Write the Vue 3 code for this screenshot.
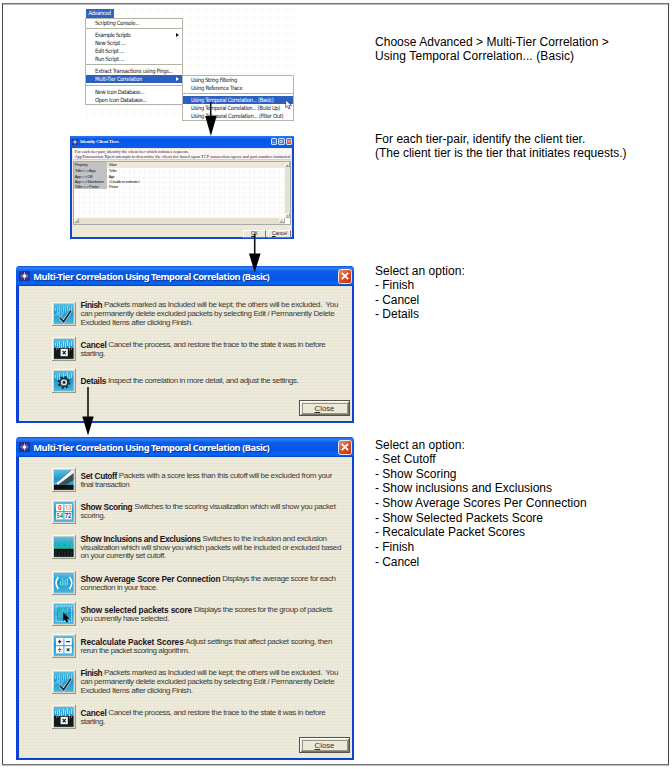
<script setup>
import { h } from 'vue'

// Tracks a run of text so that it fills its measure exactly.
const vFit = {
  mounted(el, { value }) {
    if (!value) return
    const w = el.getBoundingClientRect().width
    el.style.letterSpacing = (value - w) / el.textContent.length + 'px'
  }
}

const menu = [
  { t: 'Scripting Console...', w: 44.3 },
  null,
  { t: 'Example Scripts', w: 35.3, sub: true },
  { t: 'New Script ...', w: 30.3 },
  { t: 'Edit Script ...', w: 29 },
  { t: 'Run Script ...', w: 29.3 },
  null,
  { t: 'Extract Transactions using Pings...', w: 77.7 },
  { t: 'Multi-Tier Correlation', w: 47, sub: true, on: true },
  null,
  { t: 'New Icon Database...', w: 49.3 },
  { t: 'Open Icon Database...', w: 51.7 }
]
const submenu = [
  { t: 'Using String Filtering', w: 45.9 },
  { t: 'Using Reference Trace', w: 51.3 },
  null,
  { t: 'Using Temporal Correlation... (Basic)', w: 82.5, on: true },
  { t: 'Using Temporal Correlation... (Build Up)', w: 89 },
  { t: 'Using Temporal Correlation... (Filter Out)', w: 92.3 }
]

const tiers = [
  ['Teller <-> App', 20.7, 'Teller', 8],
  ['App <-> DB', 17.7, 'App', 5.3],
  ['App <-> Mainframe', 29, '<Unable to estimate>', 31],
  ['Teller <-> Printer', 24, 'Printer', 9.3]
]

const finish = {
  icon: 'finish', name: 'Finish', nw: 21.7,
  lines: [
    [' Packets marked as Included will be kept; the others will be excluded.  You', 235.8],
    ['can permanently delete excluded packets by selecting Edit / Permanently Delete', 253.7],
    ['Excluded Items after clicking Finish.', 112]
  ]
}
const cancel = {
  icon: 'cancel', name: 'Cancel', nw: 26,
  lines: [[' Cancel the process, and restore the trace to the state it was in before', 218.8], ['starting.', 24.3]]
}
const dialogs = [
  {
    cls: 'short',
    options: [
      finish,
      cancel,
      { icon: 'details', name: 'Details', nw: 25.7, lines: [[' Inspect the correlation in more detail, and adjust the settings.', 192.3]] }
    ]
  },
  {
    cls: 'tall',
    options: [
      { icon: 'cutoff', name: 'Set Cutoff', nw: 36.5, lines: [[' Packets with a score less than this cutoff will be excluded from your', 215], ['final transaction', 48.9]] },
      { icon: 'scoring', name: 'Show Scoring', nw: 51.9, lines: [[' Switches to the scoring visualization which will show you packet', 203.1], ['scoring.', 24.5]] },
      { icon: 'inclusions', name: 'Show Inclusions and Exclusions', nw: 120.2, lines: [[' Switches to the inclusion and exclusion', 125.9], ['visualization which will show you which packets will be included or excluded based', 260.5], ['on your currently set cutoff.', 85.2]] },
      { icon: 'average', name: 'Show Average Score Per Connection', nw: 139.9, lines: [[' Displays the average score for each', 115.1], ['connection in your trace.', 77]] },
      { icon: 'selected', name: 'Show selected packets score', nw: 111.6, lines: [[' Displays the scores for the group of packets', 140], ['you currently have selected.', 88.5]] },
      { icon: 'recalc', name: 'Recalculate Packet Scores', nw: 103.2, lines: [[' Adjust settings that affect packet scoring, then', 148.4], ['rerun the packet scoring algorithm.', 108.9]] },
      finish,
      cancel
    ]
  }
]

const notes = [
  { cls: 'n1', lines: [['Choose Advanced > Multi-Tier Correlation >', 233.8], ['Using Temporal Correlation... (Basic)', 199.2]] },
  { cls: 'n2', lines: [['For each tier-pair, identify the client tier.', 210.3], ['(The client tier is the tier that initiates requests.)', 251.5]] },
  { cls: 'n3', lines: [['Select an option:', 89.8], ['- Finish', 39.2], ['- Cancel', 44.2], ['- Details', 44]] },
  {
    cls: 'n4',
    lines: [
      ['Select an option:', 89.8], ['- Set Cutoff', 60.7], ['- Show Scoring', 81.5],
      ['- Show inclusions and Exclusions', 177], ['- Show Average Scores Per Connection', 211.6],
      ['- Show Selected Packets Score', 168], ['- Recalculate Packet Scores', 150],
      ['- Finish', 39.2], ['- Cancel', 44.2]
    ]
  }
]

const p = (d, a = {}) => h('path', { d, fill: 'none', ...a })
const r = (x, y, width, height, fill, a = {}) => h('rect', { x, y, width, height, fill, ...a })
const num = (x, y, t, fill) => h('text', { x, y, fill, 'font-size': 7, 'font-family': 'Noto Sans, sans-serif', 'font-weight': 600, 'text-anchor': 'middle', textLength: t.length > 1 ? 6.6 : 3.6, lengthAdjust: 'spacingAndGlyphs' }, t)
const wave = (stroke) => p('M3.5 9V6M5.5 11V5M7.5 12V4M9.5 11V6.5M11.5 10V4M13.5 11V5M15.5 9V3M17.5 11V6M19.5 9V4', { stroke, 'stroke-width': 0.7 })

const art = {
  finish: () => [wave('#a5dcf2'), p('M2 13h3v-2h2v3h3v-3h2', { stroke: '#9adcf2', 'stroke-width': 0.8 }), p('M8.3 16.2L11.6 19.6L18.8 8.8', { stroke: '#e6f4f8', 'stroke-width': 2.8 }), p('M8.3 16.2L11.6 19.6L18.8 8.8', { stroke: '#1b2226', 'stroke-width': 1.7 })],
  cancel: () => [wave('#d8f2fc'), r(2, 11, 19.5, 10.8, '#15191b'), p('M4.5 11v2.5M6.5 11v1.5M17.5 11v3M19.5 11v2', { stroke: '#6f8f9a', 'stroke-width': 0.7 }), r(8.6, 11.8, 7.2, 7.4, '#fff'), p('M10.6 13.8l3.2 3.5M13.8 13.8l-3.2 3.5', { stroke: '#111', 'stroke-width': 1.1 })],
  details: () => [wave('#c2eafa'), h('circle', { cx: 12, cy: 13.4, r: 5.5, fill: 'none', stroke: '#1c2327', 'stroke-width': 1.7, 'stroke-dasharray': '2.2 2.12' }), h('circle', { cx: 12, cy: 13.4, r: 4, fill: '#b9e1ee', stroke: '#1c2327', 'stroke-width': 1.6 }), h('circle', { cx: 12, cy: 13.4, r: 1.4, fill: '#1c2327' })],
  cutoff: () => [r(2, 16.8, 19.5, 5, '#0d1113'), p('M2.2 17L18 2.4L21.5 2V5L12 14Z', { fill: '#f1f5f6' }), p('M2.2 17.3L21.5 4.5V12L14 16.8H2.2Z', { fill: '#3d5059' }), p('M4 15.6L18.5 2.5', { stroke: '#20343e', 'stroke-width': 0.7 }), p('M5 16L21.3 3.8', { stroke: '#f6fafa', 'stroke-width': 2.4 })],
  scoring: () => [r(4, 4, 7.4, 7.2, '#fff'), r(12.4, 4, 7.4, 7.2, '#fff'), r(4, 12.2, 7.4, 7.2, '#fff'), r(12.4, 12.2, 7.4, 7.2, '#fff'), num(7.7, 10.2, '0', '#d8332b'), num(16, 10.2, '13', '#ef8b2c'), num(7.7, 18.4, '54', '#187a52'), num(16, 18.4, '72', '#27348f')],
  inclusions: () => [r(2, 13.5, 19.5, 8.3, '#0c1012'), p('M3 14V10M5 14V6M7 14V10.5M9 14V5M11 14V9.5M13 14V11M15 14V7M17 14V4.5M19.4 14V8M20.8 14V10', { stroke: '#26d08a', 'stroke-width': 1 }), p('M4 15V21M7 16V21M10 15V21M13 16V21M16 15V21M19 16V21', { stroke: '#59676b', 'stroke-width': 0.5 })],
  average: () => [p('M6.3 6Q1.8 11.7 6.3 18M17.5 6Q22 11.7 17.5 18', { stroke: '#fff', 'stroke-width': 1.6 }), p('M8.5 14V10M10.3 15V7M12 14V9.5M13.8 15V8M15.4 14V7', { stroke: '#70f0dc', 'stroke-width': 0.9 })],
  selected: () => [r(4, 4, 15.6, 15.4, 'none', { stroke: '#e4f6fc', 'stroke-width': 0.8, 'stroke-dasharray': '1.6 .9' }), p('M7 15V10M9 15V8M11 13V6.5M13 11V8M15.5 11V6', { stroke: '#3fdcc0', 'stroke-width': 1 }), p('M11.2 10.2V19L13.1 17.3L14.5 20.4L16.2 19.6L14.8 16.7H17.5Z', { fill: '#050708' })],
  recalc: () => [r(4, 4, 7.4, 7.2, '#fff'), r(12.4, 4, 7.4, 7.2, '#fff'), r(4, 12.2, 7.4, 7.2, '#fff'), r(12.4, 12.2, 7.4, 7.2, '#fff'), p('M5.9 7.6h3.6M7.7 5.8v3.6M14.2 7.6h3.8M5.9 15.8h3.6M14.7 14.4l2.8 2.8M17.5 14.4l-2.8 2.8', { stroke: '#263238', 'stroke-width': 1.1 }), p('M7.2 13.7h1v1h-1zM7.2 16.9h1v1h-1z', { fill: '#263238' })]
}

const OptionIcon = ({ kind }) =>
  h('svg', { width: 24, height: 24, viewBox: '0 0 24 24' }, [
    r(0, 0, 24, 24, '#9c998b'),
    r(0, 0, 23, 23, '#fbf9ee'),
    r(1, 1, 22, 22, '#d9d5c6'),
    r(2, 1.8, 19.5, 20, 'url(#sky)'),
    ...art[kind]()
  ])
OptionIcon.props = ['kind']
</script>

<template>
  <main class="page">
    <svg class="defs" width="0" height="0">
      <linearGradient id="sky" x1="0" y1="0" x2="0" y2="1">
        <stop offset="0" stop-color="#5cc0e6" />
        <stop offset=".45" stop-color="#1f96cb" />
        <stop offset="1" stop-color="#4bb4de" />
      </linearGradient>
    </svg>

    <section class="figures">
      <div class="menu-shot">
        <div class="menu-tab"><span v-fit="22">Advanced</span></div>
        <div class="menu">
          <template v-for="(m, i) in menu" :key="i">
            <div v-if="m" class="item" :class="{ on: m.on }">
              <span v-fit="m.w">{{ m.t }}</span>
              <i v-if="m.sub" class="more"></i>
            </div>
            <div v-else class="sep"></div>
          </template>
        </div>
        <div class="menu submenu">
          <template v-for="(m, i) in submenu" :key="i">
            <div v-if="m" class="item" :class="{ on: m.on }"><span v-fit="m.w">{{ m.t }}</span></div>
            <div v-else class="sep"></div>
          </template>
        </div>
        <svg class="pointer" width="8" height="11" viewBox="0 0 8 11">
          <path d="M.8 .8V8.6L2.6 7L3.8 9.9L5.2 9.3L4 6.5H6.4Z" fill="#fff" stroke="#29365c" stroke-width=".7" />
        </svg>
      </div>

      <div class="tiers">
        <header>
          <svg width="6" height="6" viewBox="0 0 6 6"><rect width="6" height="6" fill="#27328f" /><path d="M3 .6V5.4M.6 3H5.4" stroke="#fff" stroke-width=".8" /></svg>
          <span v-fit="38.7" class="tiers-title">Identify Client Tiers</span>
          <b class="wb"><svg viewBox="0 0 6 6"><path d="M1.3 4.5H3.6" /></svg></b>
          <b class="wb"><svg viewBox="0 0 6 6"><path d="M1.4 1.6H4.6V4.5H1.4Z" /></svg></b>
          <b class="wb red"><svg viewBox="0 0 6 6"><path d="M1.5 1.5L4.5 4.5M4.5 1.5L1.5 4.5" /></svg></b>
        </header>
        <div class="tiers-body">
          <div class="intro">
            <div><span v-fit="114.3">For each tier pair, identify the client tier which initiates requests.</span></div>
            <div><span v-fit="216.7">AppTransaction Xpert attempts to determine the client tier based upon TCP connection opens and port number contacted.</span></div>
          </div>
          <div class="grid">
            <div class="rows">
              <div class="row head"><span class="c1"><span v-fit="12.7">Property</span></span><span class="c2"><span v-fit="8">Value</span></span></div>
              <div v-for="t in tiers" :key="t[0]" class="row">
                <span class="c1"><span v-fit="t[1]">{{ t[0] }}</span></span>
                <span class="c2"><span v-fit="t[3]">{{ t[2] }}</span></span>
              </div>
            </div>
            <div class="vbar"><i>▴</i><i>▾</i></div>
            <div class="hbar"><i>◂</i><i>▸</i></div>
          </div>
          <div class="tiers-buttons">
            <span class="sbtn"><u>O</u>K</span>
            <span class="sbtn"><u>C</u>ancel</span>
          </div>
        </div>
      </div>

      <div v-for="d in dialogs" :key="d.cls" class="dialog" :class="d.cls">
        <header>
          <svg width="11" height="10" viewBox="0 0 11 10">
            <rect width="11" height="10" fill="#2b2f86" />
            <path d="M5.5 1.2V8.8M1.6 5H9.4M3.2 2.7L7.8 7.3M7.8 2.7L3.2 7.3" stroke="#cdd6ff" stroke-width=".8" />
            <circle cx="5.5" cy="5" r="1.5" fill="#fff" />
          </svg>
          <span v-fit="236" class="title">Multi-Tier Correlation Using Temporal Correlation (Basic)</span>
          <b class="close"><svg width="14" height="14" viewBox="0 0 14 14"><path d="M3.8 3.8L10.2 10.2M10.2 3.8L3.8 10.2" stroke="#fff" stroke-width="1.8" /></svg></b>
        </header>
        <div class="body">
          <div v-for="o in d.options" :key="o.name" class="option">
            <OptionIcon :kind="o.icon" />
            <div class="text">
              <div v-for="(l, i) in o.lines" :key="i" class="line">
                <strong v-if="i === 0" v-fit="o.nw">{{ o.name }}</strong><span v-fit="l[1]">{{ l[0] }}</span>
              </div>
            </div>
          </div>
          <div class="btn"><span><u>C</u>lose</span></div>
        </div>
      </div>
    </section>

    <aside class="notes">
      <div v-for="n in notes" :key="n.cls" class="note" :class="n.cls">
        <div v-for="(l, i) in n.lines" :key="i"><span v-fit="l[1]">{{ l[0] }}</span></div>
      </div>
    </aside>

    <svg class="arrows" width="672" height="769" viewBox="0 0 672 769">
      <g stroke="#111" stroke-width="1.6">
        <path d="M210.7 102V118" /><path d="M254.7 234V256" /><path d="M88 387V419" />
      </g>
      <path d="M205.2 116H216.6L210.9 136Z" />
      <path d="M249 253.5H260.6L254.7 272.5Z" />
      <path d="M82.3 416.5H93.7L88 435.5Z" />
    </svg>
  </main>
</template>

<style>
body { background: #fff; overflow: hidden; }
</style>

<style scoped>
.page {
  position: relative; box-sizing: border-box; display: flex; width: 672px; height: 769px;
  font-family: "Liberation Sans", Arial, sans-serif; color: #000; background: #fff;
}
.page::before { content: ""; position: absolute; left: 2px; top: 3px; width: 665px; height: 760px; border: 1px solid #444; border-top-color: #777; border-bottom-color: #777; box-shadow: inset 0 1px #bbb, 0 1px #bbb; }
.page span { white-space: pre; }
.defs { position: absolute; }
.figures { position: relative; width: 375px; }
.arrows { position: absolute; left: 0; top: 0; pointer-events: none; }

.menu-shot {
  position: relative; width: 208px; height: 112px; margin: 9px 0 0 86px;
  font: 5.8px "DejaVu Sans Condensed", "DejaVu Sans", sans-serif; color: #222;
  background: repeating-linear-gradient(90deg, #f8f8f8 0 1px, transparent 1px 8px), repeating-linear-gradient(#f8f8f8 0 1px, transparent 1px 8px);
}
.menu-tab { width: 27.5px; height: 9px; box-sizing: border-box; padding-left: 2.5px; line-height: 9px; color: #fff; background: #2f63c4; }
.menu { box-sizing: border-box; width: 98px; margin-left: -1px; background: #fff; border: 1px solid #b7b4aa; }
.item { display: flex; align-items: center; height: 8px; padding-left: 9px; line-height: 8px; }
.item.on { color: #fff; background: #2b5fc0; }
.sep { height: 4.2px; background: linear-gradient(#b5b2a6, #b5b2a6) 0 1.2px / 100% 1px no-repeat; }
.more { margin-left: auto; margin-right: 3px; border: 2px solid transparent; border-left: 3px solid #111; border-right: 0; }
.on .more { border-left-color: #fff; }
.submenu { position: absolute; left: 96px; top: 66px; width: 112px; margin: 0; }
.submenu .item { padding-left: 8px; }
.pointer { position: absolute; left: 199px; top: 90px; }

.tiers { box-sizing: border-box; width: 224px; height: 103px; margin: 15px 0 0 70px; padding: 0 2px 2px; background: #1248cf; font-size: 4px; color: #222; }
.tiers header { display: flex; align-items: center; gap: 1px; height: 11.5px; margin: 0 -2px; padding: 0 2px; background: linear-gradient(#2b7bf3, #0755e6 30%, #0a5cf0); }
.tiers-title { margin: 0 auto 0 1px; font: bold 4.9px "Liberation Serif", serif; color: #fff; }
.wb { box-sizing: border-box; width: 6.3px; height: 6.8px; background: #3b78ee; border: .5px solid #cfe0ff; border-radius: 1px; }
.wb svg { display: block; width: 100%; height: 100%; fill: none; stroke: #fff; stroke-width: .9; }
.red { background: #e0532f; }
.tiers-body { height: 89.5px; padding: 1px 1px 0; background: #ece9d8; box-sizing: border-box; }
.intro { box-sizing: border-box; height: 11px; padding: 0 0 0 1.5px; font: 4.7px/5.4px "Liberation Serif", serif; color: #40203c; background: #fbf7f5; border-bottom: 1px solid #d5d0c0; }
.grid { display: grid; grid-template: 56px 5.5px / 1fr 5.5px; margin-top: 1.5px; background: #fff; border: .5px solid #aaa; }
.rows { background: repeating-linear-gradient(90deg, #f7f7f7 0 1px, transparent 1px 5px), repeating-linear-gradient(#f7f7f7 0 1px, transparent 1px 5px), #fff; }
.row { display: flex; height: 5.3px; line-height: 5.3px; border: 0 solid #ddd; }
.head { height: 6.3px; line-height: 6px; background: #ece9d8; }
.c1 { box-sizing: border-box; width: 33.3px; padding-left: .7px; background: #c2c2c2; }
.c2 { padding-left: 1.4px; }
.vbar, .hbar { display: flex; justify-content: space-between; background: #e4e1d3; }
.vbar { flex-direction: column; }
.hbar i, .vbar i { box-sizing: border-box; width: 5.3px; height: 5.3px; font: 3px/4px "DejaVu Sans", sans-serif; text-align: center; color: #666; background: #ece9d8; border: 1px solid; border-color: #f6f4ea #aaa79a #aaa79a #f6f4ea; }
.hbar { grid-column: 1 / 2; }
.tiers-buttons { display: flex; justify-content: flex-end; gap: 2px; margin-top: 5px; }
.sbtn { box-sizing: border-box; width: 23px; height: 8px; font-size: 4.8px; line-height: 6px; text-align: center; background: #ece9d8; border: 1px solid; border-color: #fff #777 #777 #fff; }
u { text-decoration-thickness: .6px; text-underline-offset: .8px; }

.dialog { box-sizing: border-box; display: flex; flex-direction: column; width: 338px; margin-left: 16px; background: #0c43d2; border-radius: 4px 4px 0 0; }
.short { height: 157px; margin-top: 27px; }
.tall { height: 323px; margin-top: 14px; }
.dialog header { display: flex; align-items: center; height: 19.5px; padding: 1px 2px 0 3.3px; box-sizing: border-box; border-radius: 4px 4px 0 0; background: linear-gradient(#0b4fd0, #2f83f7 10%, #0a5be8 28%, #0456e4 65%, #0665f6 88%, #0546c4); }
.title { margin-left: 3px; font: bold 9.3px "Noto Sans", sans-serif; color: #fff; text-shadow: 1px 1px 0 #0b3694; }
.close { box-sizing: border-box; width: 14.5px; height: 14.5px; margin-left: auto; background: linear-gradient(135deg, #ef8f70, #d9481f 55%, #c4390f); border: 1px solid #f3e4e0; border-radius: 2.5px; }
.close svg { display: block; margin: -.75px; }
.body {
  flex: 1; display: flex; flex-direction: column; margin: 0 2px 2px 2.5px; padding: 8px 2px 5px 33.5px;
  background: repeating-linear-gradient(90deg, rgba(200, 196, 165, .1) 0 1px, transparent 1px 3px), repeating-linear-gradient(rgba(200, 196, 165, .14) 0 1px, transparent 1px 3px), #eeebdc;
}
.option { display: flex; align-items: center; gap: 4.5px; min-height: 31.4px; }
.option svg { flex: none; }
.text { padding: 7.55px 0 6.15px; font-size: 8px; line-height: 8.8px; color: #3a3a38; }
.line { display: flex; height: 8.8px; }
.line strong { white-space: pre; font-size: 8.3px; color: #1a101a; }
.btn {
  box-sizing: border-box; width: 51px; height: 16px; margin: auto 0 0 auto; padding: 1.5px;
  border: 1px solid #55534b; box-shadow: inset 1px 1px #fff, inset -1px -1px #77746a; background: #ece9d8;
  display: flex;
}
.btn span { flex: 1; margin: 0; border: .5px solid #999686; font-size: 7.8px; line-height: 10.5px; text-align: center; color: #333; }

.notes { position: relative; width: 290px; font-size: 12px; line-height: 14.62px; }
.note { height: 0; overflow: visible; }
.n1 { margin-top: 34.5px; }
.n2 { margin-top: 97px; }
.n3 { margin-top: 132px; }
.n4 { margin-top: 174px; }
</style>
